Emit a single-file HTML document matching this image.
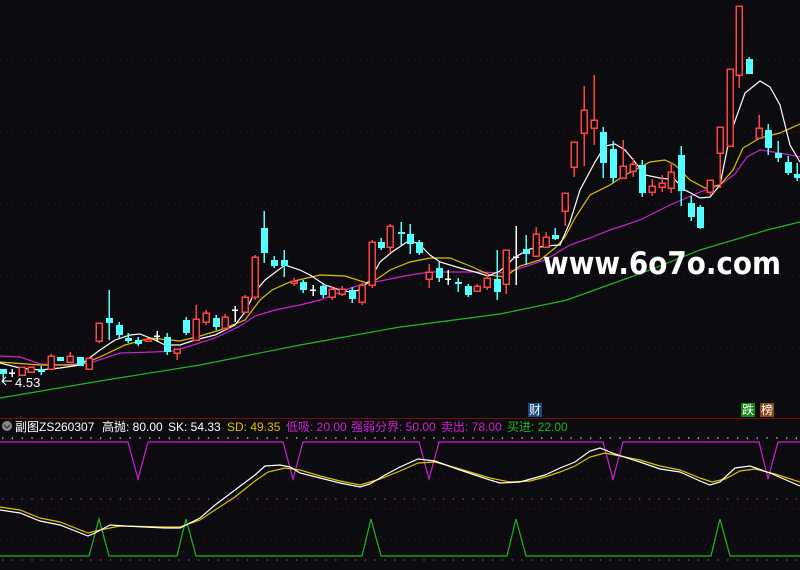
<!DOCTYPE html>
<html><head><meta charset="utf-8"><style>
html,body{margin:0;padding:0;background:#0c0c10;width:800px;height:570px;overflow:hidden}
svg{position:absolute;left:0;top:0}
.h{position:absolute;top:419px;font:12px "Liberation Sans","Noto Sans CJK SC",sans-serif;white-space:nowrap;line-height:16px}
.b{position:absolute;font:12px "Noto Sans CJK SC",sans-serif;color:#fff;line-height:14px;width:14px;height:14px;text-align:center}
</style></head><body>
<svg width="800" height="570" xmlns="http://www.w3.org/2000/svg">
<g stroke="#6a1010" stroke-width="1" stroke-dasharray="1,5" shape-rendering="crispEdges">
<line x1="0" y1="24" x2="800" y2="24"/><line x1="0" y1="60" x2="800" y2="60"/><line x1="0" y1="96" x2="800" y2="96"/><line x1="0" y1="132" x2="800" y2="132"/><line x1="0" y1="168" x2="800" y2="168"/><line x1="0" y1="204" x2="800" y2="204"/><line x1="0" y1="240" x2="800" y2="240"/><line x1="0" y1="276" x2="800" y2="276"/><line x1="0" y1="312" x2="800" y2="312"/><line x1="0" y1="348" x2="800" y2="348"/><line x1="0" y1="384" x2="800" y2="384"/>
<line x1="0" y1="448" x2="800" y2="448"/><line x1="0" y1="479" x2="800" y2="479"/><line x1="0" y1="509" x2="800" y2="509"/><line x1="0" y1="540" x2="800" y2="540"/>
</g>
<g stroke-width="1.3" stroke-dasharray="1.3,8.5">
<line x1="2" y1="438" x2="800" y2="438" stroke="#ddd"/>
<line x1="2" y1="499" x2="800" y2="499" stroke="#d020d0"/>
<line x1="2" y1="560" x2="800" y2="560" stroke="#d020d0"/>
</g>
<line x1="0" y1="418.5" x2="800" y2="418.5" stroke="#7a0c0c"/>
<g fill="none" stroke-width="1.2">
<polyline stroke="#1fb81f" points="0,398 100,381 200,365 300,345 400,327 500,314 567,300 650,270 700,250 767,230 800,222"/>
<polyline stroke="#d020d0" points="0,356 20,357 40,364 60,365 90,363 120,353 153,352 173,351 190,346 215,338 240,326 255,316 275,310 300,305 320,300 345,290 360,285 385,280 410,275 430,272 460,272 480,272 500,273 515,270 545,260 570,245 590,238 610,230 640,220 670,205 700,192 720,185 735,174 747,157 760,150 780,153 800,157"/>
<polyline stroke="#e0c000" points="0,362 40,365 80,365 100,357 125,345 150,338 180,341 200,336 220,330 245,320 260,300 272,290 290,282 320,275 345,276 370,284 390,270 410,262 430,258 450,258 470,266 490,275 505,277 520,266 540,260 555,248 565,237 575,218 590,195 610,185 625,175 635,170 650,162 665,160 675,165 690,180 705,188 720,185 733,170 743,148 760,138 780,133 800,124"/>
<polyline stroke="#ffffff" points="0,363 20,368 40,370 60,368 80,365 100,350 115,340 130,335 140,334 155,340 165,345 180,345 195,340 215,335 235,325 245,312 255,292 265,280 285,265 300,270 310,275 325,285 340,290 350,292 360,290 370,280 380,262 392,252 410,240 420,245 430,255 440,262 460,268 475,272 488,276 500,271 515,257 530,249 545,246 560,245 570,222 580,190 595,162 605,146 615,144 625,150 635,162 645,175 660,178 675,180 685,190 700,198 710,197 720,185 730,135 745,93 760,81 770,87 780,105 790,145 800,162"/>
</g>
<g stroke-width="1.5" shape-rendering="crispEdges">
<g stroke="#ff4444">
<line x1="51" y1="354" x2="51" y2="369"/><line x1="70" y1="352" x2="70" y2="362"/><line x1="99" y1="323" x2="99" y2="343"/><line x1="177" y1="349" x2="177" y2="360"/><line x1="196" y1="305" x2="196" y2="340"/><line x1="206" y1="310" x2="206" y2="325"/><line x1="225" y1="314" x2="225" y2="330"/><line x1="245" y1="295" x2="245" y2="312"/><line x1="255" y1="255" x2="255" y2="300"/><line x1="294" y1="278" x2="294" y2="286"/><line x1="332" y1="286" x2="332" y2="300"/><line x1="342" y1="286" x2="342" y2="296"/><line x1="362" y1="283" x2="362" y2="305"/><line x1="372" y1="240" x2="372" y2="288"/><line x1="390" y1="224" x2="390" y2="253"/><line x1="429" y1="264" x2="429" y2="288"/><line x1="477" y1="284" x2="477" y2="292"/><line x1="487" y1="275" x2="487" y2="290"/><line x1="506" y1="250" x2="506" y2="294"/><line x1="536" y1="227" x2="536" y2="256"/><line x1="546" y1="232" x2="546" y2="247"/><line x1="565" y1="193" x2="565" y2="226"/><line x1="574" y1="142" x2="574" y2="177"/><line x1="584" y1="86" x2="584" y2="166"/><line x1="594" y1="75" x2="594" y2="145"/><line x1="623" y1="140" x2="623" y2="178"/><line x1="633" y1="158" x2="633" y2="177"/><line x1="652" y1="179" x2="652" y2="196"/><line x1="662" y1="175" x2="662" y2="192"/><line x1="671" y1="163" x2="671" y2="193"/><line x1="710" y1="180" x2="710" y2="195"/><line x1="720" y1="127" x2="720" y2="188"/><line x1="739" y1="6" x2="739" y2="88"/><line x1="759" y1="115" x2="759" y2="138"/>
</g>
<g stroke="#54ffff">
<line x1="3" y1="369" x2="3" y2="383"/><line x1="41" y1="366" x2="41" y2="375"/><line x1="109" y1="290" x2="109" y2="340"/><line x1="119" y1="322" x2="119" y2="338"/><line x1="128" y1="333" x2="128" y2="343"/><line x1="138" y1="337" x2="138" y2="346"/><line x1="167" y1="333" x2="167" y2="355"/><line x1="186" y1="317" x2="186" y2="335"/><line x1="216" y1="315" x2="216" y2="330"/><line x1="264" y1="211" x2="264" y2="263"/><line x1="274" y1="256" x2="274" y2="268"/><line x1="284" y1="250" x2="284" y2="277"/><line x1="303" y1="280" x2="303" y2="293"/><line x1="323" y1="284" x2="323" y2="298"/><line x1="352" y1="287" x2="352" y2="303"/><line x1="381" y1="238" x2="381" y2="250"/><line x1="401" y1="222" x2="401" y2="245"/><line x1="410" y1="224" x2="410" y2="254"/><line x1="419" y1="240" x2="419" y2="255"/><line x1="439" y1="262" x2="439" y2="282"/><line x1="458" y1="278" x2="458" y2="292"/><line x1="468" y1="284" x2="468" y2="297"/><line x1="497" y1="250" x2="497" y2="300"/><line x1="526" y1="235" x2="526" y2="265"/><line x1="555" y1="228" x2="555" y2="240"/><line x1="603" y1="127" x2="603" y2="178"/><line x1="613" y1="141" x2="613" y2="183"/><line x1="642" y1="160" x2="642" y2="197"/><line x1="681" y1="146" x2="681" y2="206"/><line x1="691" y1="196" x2="691" y2="221"/><line x1="700" y1="205" x2="700" y2="229"/><line x1="749" y1="57" x2="749" y2="74"/><line x1="768" y1="124" x2="768" y2="155"/><line x1="778" y1="141" x2="778" y2="162"/><line x1="788" y1="156" x2="788" y2="175"/><line x1="797" y1="163" x2="797" y2="181"/>
</g>
<g stroke="#ffffff">
<line x1="12" y1="369" x2="12" y2="377"/><line x1="9" y1="373" x2="15" y2="373"/>
<line x1="157" y1="331" x2="157" y2="342"/><line x1="154" y1="336" x2="160" y2="336"/>
<line x1="235" y1="306" x2="235" y2="322"/><line x1="232" y1="310" x2="238" y2="310"/>
<line x1="313" y1="285" x2="313" y2="296"/><line x1="310" y1="290" x2="316" y2="290"/>
<line x1="448" y1="270" x2="448" y2="285"/><line x1="445" y1="279" x2="451" y2="279"/>
<line x1="516" y1="226" x2="516" y2="285"/><line x1="513" y1="257" x2="519" y2="257"/>
</g>
</g>
<g fill="#0c0c10" stroke="#ff4444" stroke-width="1.5" shape-rendering="crispEdges">
<rect x="19" y="367" width="6" height="8"/><rect x="28" y="367" width="6" height="5"/><rect x="48" y="356" width="6" height="13"/><rect x="67" y="356" width="6" height="6"/><rect x="86" y="358" width="6" height="11"/><rect x="96" y="323" width="6" height="18"/><rect x="145" y="339" width="6" height="2"/><rect x="174" y="349" width="6" height="4"/><rect x="193" y="319" width="6" height="21"/><rect x="203" y="313" width="6" height="9"/><rect x="222" y="317" width="6" height="11"/><rect x="242" y="297" width="6" height="15"/><rect x="252" y="257" width="6" height="40"/><rect x="291" y="281" width="6" height="2"/><rect x="329" y="289" width="6" height="8"/><rect x="339" y="289" width="6" height="5"/><rect x="359" y="285" width="6" height="17"/><rect x="369" y="242" width="6" height="43"/><rect x="387" y="226" width="6" height="21"/><rect x="426" y="272" width="6" height="7"/><rect x="474" y="286" width="6" height="5"/><rect x="484" y="278" width="6" height="9"/><rect x="503" y="250" width="6" height="34"/><rect x="533" y="234" width="6" height="22"/><rect x="543" y="237" width="6" height="10"/><rect x="562" y="193" width="6" height="18"/><rect x="571" y="142" width="6" height="25"/><rect x="581" y="110" width="6" height="23"/><rect x="591" y="120" width="6" height="8"/><rect x="620" y="166" width="6" height="12"/><rect x="630" y="164" width="6" height="7"/><rect x="649" y="186" width="6" height="6"/><rect x="659" y="183" width="6" height="4"/><rect x="668" y="172" width="6" height="16"/><rect x="707" y="180" width="6" height="12"/><rect x="717" y="127" width="6" height="26"/><rect x="727" y="69" width="6" height="77"/><rect x="736" y="6" width="6" height="69"/><rect x="756" y="128" width="6" height="10"/>
</g>
<g fill="#54ffff" shape-rendering="crispEdges">
<rect x="0" y="369" width="7" height="5"/><rect x="38" y="369" width="7" height="3"/><rect x="57" y="357" width="7" height="4"/><rect x="77" y="357" width="7" height="9"/><rect x="106" y="318" width="7" height="5"/><rect x="116" y="325" width="7" height="10"/><rect x="125" y="338" width="7" height="3"/><rect x="135" y="340" width="7" height="4"/><rect x="164" y="337" width="7" height="15"/><rect x="183" y="320" width="7" height="13"/><rect x="213" y="318" width="7" height="9"/><rect x="261" y="228" width="7" height="25"/><rect x="271" y="260" width="7" height="6"/><rect x="281" y="260" width="7" height="6"/><rect x="300" y="282" width="7" height="8"/><rect x="320" y="286" width="7" height="9"/><rect x="349" y="290" width="7" height="9"/><rect x="378" y="242" width="7" height="6"/><rect x="398" y="232" width="7" height="2"/><rect x="407" y="234" width="7" height="10"/><rect x="416" y="242" width="7" height="11"/><rect x="436" y="268" width="7" height="10"/><rect x="455" y="282" width="7" height="2"/><rect x="465" y="286" width="7" height="9"/><rect x="494" y="279" width="7" height="13"/><rect x="523" y="249" width="7" height="5"/><rect x="552" y="235" width="7" height="4"/><rect x="600" y="132" width="7" height="31"/><rect x="610" y="149" width="7" height="29"/><rect x="639" y="165" width="7" height="28"/><rect x="678" y="155" width="7" height="36"/><rect x="688" y="203" width="7" height="14"/><rect x="697" y="207" width="7" height="21"/><rect x="746" y="59" width="7" height="15"/><rect x="765" y="130" width="7" height="18"/><rect x="775" y="153" width="7" height="5"/><rect x="785" y="162" width="7" height="11"/><rect x="794" y="174" width="7" height="4"/>
</g>
<text x="543" y="274" font-family="DejaVu Sans,Liberation Sans,sans-serif" font-weight="bold" font-size="31" fill="#fff" textLength="238" lengthAdjust="spacingAndGlyphs">www.6o7o.com</text>
<text x="15" y="387" font-family="Liberation Sans,sans-serif" font-size="13" fill="#fff">4.53</text>
<polyline points="2,381 12,381" stroke="#fff" fill="none"/><polyline points="6,377 2,381 6,385" stroke="#fff" fill="none"/>
<g fill="none" stroke-width="1.2">
<polyline stroke="#d020d0" points="0,442 128,442 138,479 148,442 283,442 293,479 303,442 419,442 429,479 439,442 603,442 613,479 623,442 759,442 768,479 778,442 800,442"/>
<polyline stroke="#1fb81f" points="0,556 89,556 99,519 109,556 177,556 186,519 196,556 362,556 371,519 381,556 507,556 516,519 526,556 711,556 720,519 730,556 800,556"/>
<polyline stroke="#e0c000" points="0,507 20,510 40,518 60,522 88,533 100,530 120,526 165,527 180,527 200,520 215,510 235,497 255,481 268,472 285,468 300,470 320,476 340,481 360,485 380,479 400,471 418,463 435,462 460,469 490,478 510,482 530,481 545,477 560,472 575,466 590,457 605,453 620,456 640,460 660,466 680,470 700,478 712,482 725,479 740,471 755,469 775,474 800,482"/>
<polyline stroke="#ffffff" points="0,510 20,513 40,521 60,525 88,536 95,533 110,525 125,526 165,528 180,528 200,518 215,505 235,490 255,475 265,466 280,465 290,467 300,473 320,478 340,483 360,487 370,484 385,475 400,467 418,459 435,461 460,470 490,480 500,483 520,482 545,475 560,468 575,462 590,451 600,448 615,454 640,462 660,469 680,472 700,481 710,485 720,482 735,468 750,466 770,473 800,486"/>
</g>
<circle cx="7" cy="426" r="5" fill="#8a8a8a"/><polyline points="4,425 7,428 10,425" stroke="#333" fill="none" stroke-width="1.3"/>
</svg>
<div class="b" style="left:528px;top:403px;background:#174a7c">财</div>
<div class="b" style="left:741px;top:403px;background:#138a13">跌</div>
<div class="b" style="left:760px;top:403px;background:#8a4a14">榜</div>
<div class="h" style="left:15px;color:#fff">副图ZS260307</div>
<div class="h" style="left:102px;color:#fff">高抛: 80.00</div>
<div class="h" style="left:168px;color:#fff">SK: 54.33</div>
<div class="h" style="left:227px;color:#e0c000">SD: 49.35</div>
<div class="h" style="left:286px;color:#d020d0">低吸: 20.00</div>
<div class="h" style="left:351px;color:#d020d0">强弱分界: 50.00</div>
<div class="h" style="left:441px;color:#d020d0">卖出: 78.00</div>
<div class="h" style="left:507px;color:#1fb81f">买进: 22.00</div>
</body></html>
